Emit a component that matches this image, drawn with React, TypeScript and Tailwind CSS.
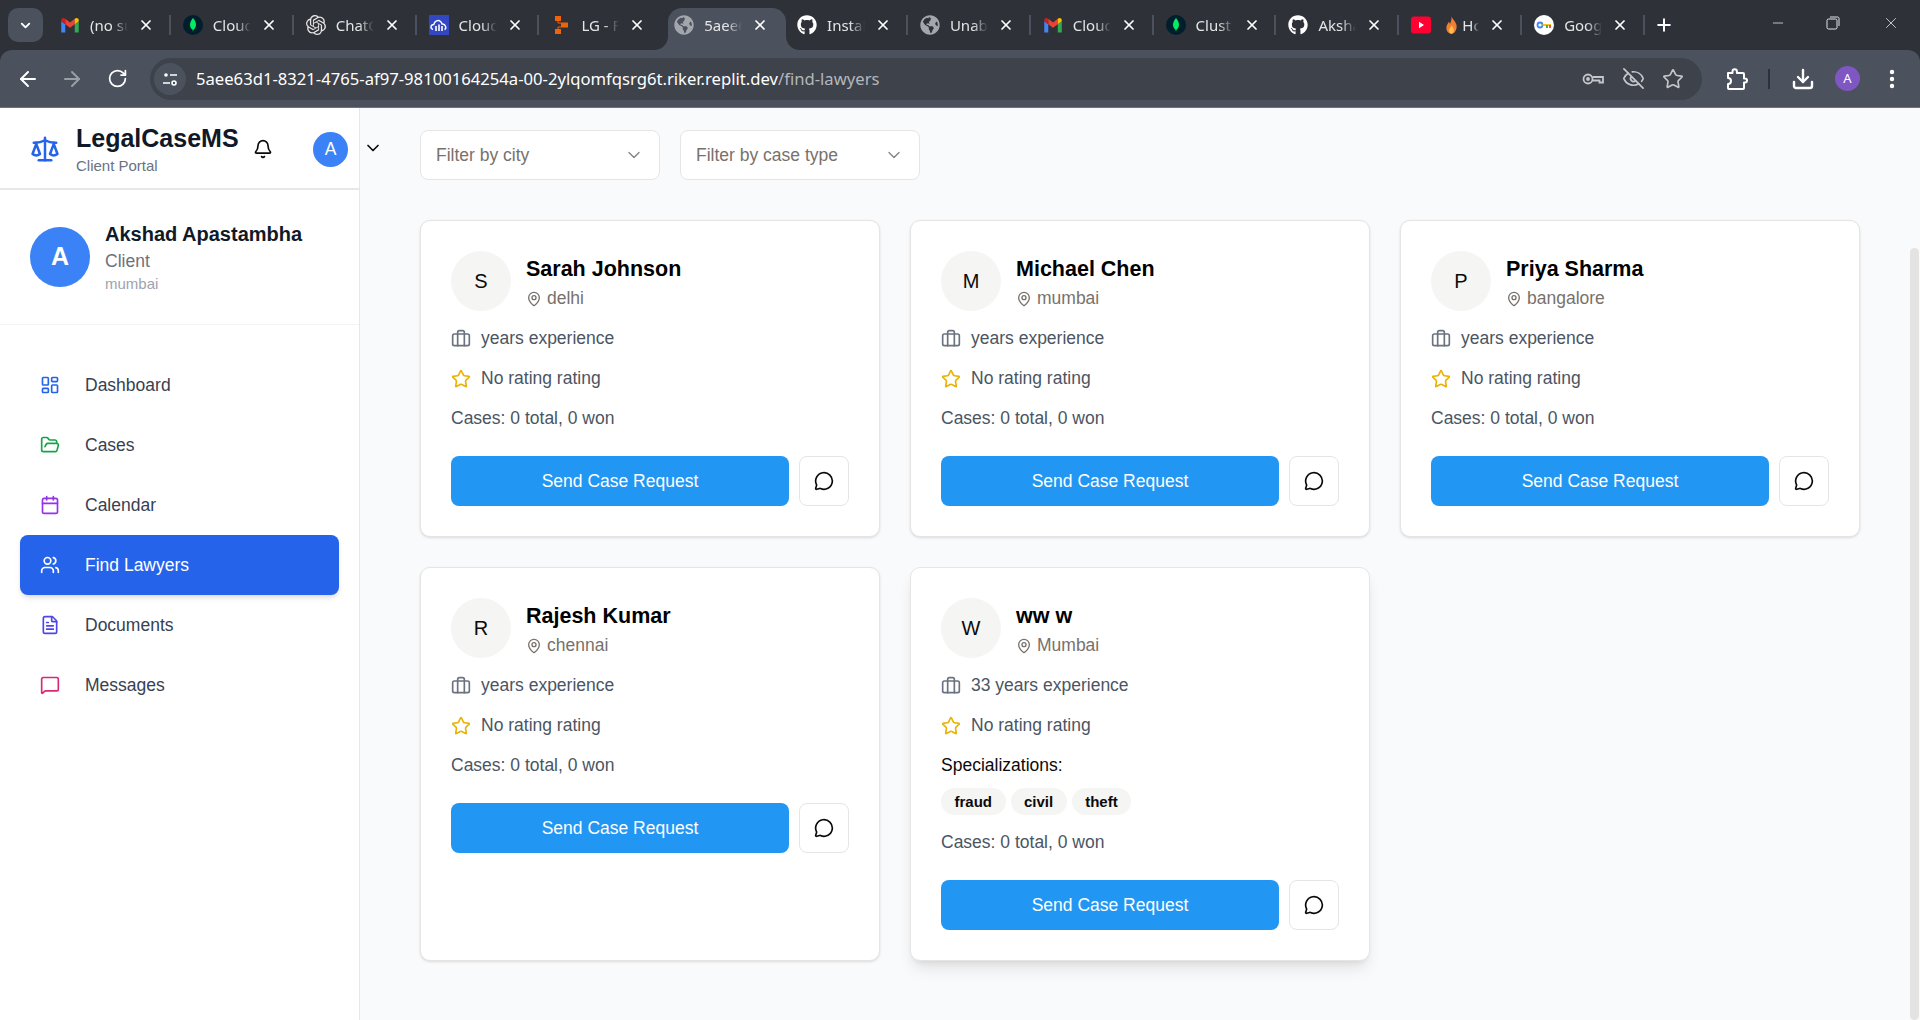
import type { ReactNode } from 'react';
import {
  ArrowLeft,
  ArrowRight,
  Bell,
  Briefcase,
  Calendar,
  ChevronDown,
  Download,
  EyeOff,
  FileText,
  FolderOpen,
  LayoutDashboard,
  MapPin,
  MessageCircle,
  MessageSquare,
  Minus,
  MoreVertical,
  Plus,
  RotateCw,
  Scale,
  Star,
  Users,
  X,
} from 'lucide-react';
import { FaGithub, FaGlobeAmericas } from 'react-icons/fa';
import { SiOpenai } from 'react-icons/si';

const GmailIcon = () => (
  <svg viewBox="0 0 24 24" className="w-5 h-5">
    <path fill="#4285f4" d="M1.5 21h4.8V11L1.5 7.5z" />
    <path fill="#34a853" d="M17.7 21h4.8V7.5L17.7 11z" />
    <path fill="#ea4335" d="M6.3 11V4.5L12 9l5.7-4.5V11L12 15.3z" />
    <path fill="#c5221f" d="M1.5 7.5V6c0-2.4 3-3.4 4.8-1.5V11z" />
    <path fill="#fbbc04" d="M17.7 11V4.5C19.5 2.6 22.5 3.6 22.5 6v1.5z" />
  </svg>
);

const MongoIcon = () => (
  <svg viewBox="0 0 24 24" className="w-5 h-5">
    <circle cx="12" cy="12" r="12" fill="#001e2b" />
    <path
      fill="#00ed64"
      d="M12 3.5c2.4 3 3.6 5.6 3.6 8.3 0 3-1.8 5-3.1 6l-.5 2.7-.5-2.7c-1.3-1-3.1-3-3.1-6 0-2.7 1.2-5.3 3.6-8.3z"
    />
  </svg>
);

const CloudIcon = () => (
  <svg viewBox="0 0 20 20" className="w-5 h-5">
    <rect width="20" height="20" fill="#3346c4" />
    <path
      fill="none"
      stroke="#fff"
      strokeWidth="1.4"
      d="M4 14.5c-3-.8-2.5-5 .8-5C5.5 6 9 4.500 11.500 6.500c1 .8 1.300 1.500 1.500 2.500 3.500-.5 5 4.500 2.500 5.500"
    />
    <path stroke="#fff" strokeWidth="1.6" d="M7 11v5M10 9.500V16M13 11v5" />
  </svg>
);

const LgIcon = () => (
  <svg viewBox="0 0 20 20" className="w-5 h-5">
    <rect x="4" y="1" width="6" height="5" fill="#f26207" />
    <rect x="10" y="7.500" width="7" height="5" fill="#f26207" />
    <rect x="4" y="14" width="6" height="5" fill="#f26207" />
    <path d="M7 6v2h3M7 14v-2h3" stroke="#f26207" fill="none" />
  </svg>
);

const YoutubeIcon = () => (
  <svg viewBox="0 0 20 20" className="w-5 h-5">
    <rect y="1.500" width="20" height="17" rx="3" fill="#ff0033" />
    <path d="M8 6.700v6.600l5-3.300z" fill="#fff" />
  </svg>
);

const FlameIcon = () => (
  <svg viewBox="0 0 12 20" className="w-[11px] h-[19px] shrink-0">
    <path
      fill="#f57c33"
      d="M6 0c.8 3 4 5 5.300 9 1.200 4.500-1.300 10-5.300 10S-.6 14.500.7 10.500C1.300 8.500 2.500 7.500 3 6c.8.6 1.200 1.400 1.300 2.300C5.600 6 6.300 3 6 0z"
    />
    <path fill="#fbc04a" d="M6 10c1.800 2 3 3.600 2.600 5.800C8.200 17.800 7 19 6 19s-2.400-1.200-2.700-3.200C3 13.800 5 12.200 6 10z" />
  </svg>
);

const GoogleKeyIcon = () => (
  <svg viewBox="0 0 20 20" className="w-5 h-5">
    <circle cx="10" cy="10" r="10" fill="#fff" />
    <circle cx="6" cy="10" r="2.500" fill="none" stroke="#4285f4" strokeWidth="1.800" />
    <path d="M8.500 10H17" stroke="#fbbc04" strokeWidth="1.800" />
    <path d="M13 10v3" stroke="#34a853" strokeWidth="1.800" />
    <path d="M16 10v3" stroke="#ea4335" strokeWidth="1.800" />
  </svg>
);

const KeyIcon = () => (
  <svg viewBox="0 0 24 24" className="w-6 h-6" fill="none" stroke="currentColor" strokeWidth="1.800">
    <circle cx="7" cy="12" r="4.500" />
    <circle cx="7" cy="12" r="1" />
    <path d="M11.500 10H22v5.500h-3.500v-2H11.500" />
  </svg>
);

const TuneIcon = () => (
  <svg viewBox="0 0 16 16" className="w-4 h-4" fill="none" stroke="currentColor" strokeWidth="1.600">
    <circle cx="4" cy="4" r="1.800" fill="currentColor" stroke="none" />
    <path d="M8 4h7M1 12h7" />
    <circle cx="12" cy="12" r="2" />
  </svg>
);

const PuzzleIcon = () => (
  <svg viewBox="0 0 24 24" className="w-6 h-6 ml-[22px] shrink-0" fill="none" stroke="currentColor" strokeWidth="2" strokeLinejoin="round">
    <path d="M4 6h4.500V4.500a2.200 2.200 0 0 1 4.400 0V6H19a1 1 0 0 1 1 1v4.500h1a2 2 0 0 1 0 4h-1V21a1 1 0 0 1-1 1H5a1 1 0 0 1-1-1v-4c2.500 0 3-1.500 3-3s-1-3-3-3z" />
  </svg>
);

const globe = <FaGlobeAmericas className="w-5 h-5 text-[#a3a7ad]" />;
const github = <FaGithub className="w-5 h-5 text-white" />;

interface Tab {
  title: string;
  icon: ReactNode;
  active?: boolean;
  flame?: boolean;
}

const tabs: Tab[] = [
  { title: '(no su', icon: <GmailIcon /> },
  { title: 'Cloud', icon: <MongoIcon /> },
  { title: 'ChatG', icon: <SiOpenai className="w-5 h-5 text-[#e5e5e5]" /> },
  { title: 'Cloud', icon: <CloudIcon /> },
  { title: 'LG - F', icon: <LgIcon /> },
  { title: '5aee6', icon: globe, active: true },
  { title: 'Instal', icon: github },
  { title: 'Unab', icon: globe },
  { title: 'Cloud', icon: <GmailIcon /> },
  { title: 'Clust', icon: <MongoIcon /> },
  { title: 'Aksha', icon: github },
  { title: 'Ho', icon: <YoutubeIcon />, flame: true },
  { title: 'Goog', icon: <GoogleKeyIcon /> },
];

const navItems = [
  { label: 'Dashboard', icon: LayoutDashboard, color: 'text-[#2563eb]' },
  { label: 'Cases', icon: FolderOpen, color: 'text-[#16a34a]' },
  { label: 'Calendar', icon: Calendar, color: 'text-[#9333ea]' },
  { label: 'Find Lawyers', icon: Users, color: 'text-white', active: true },
  { label: 'Documents', icon: FileText, color: 'text-[#4f46e5]' },
  { label: 'Messages', icon: MessageSquare, color: 'text-[#db2777]' },
];

const lawyers = [
  { name: 'Sarah Johnson', city: 'delhi', years: '' },
  { name: 'Michael Chen', city: 'mumbai', years: '' },
  { name: 'Priya Sharma', city: 'bangalore', years: '' },
  { name: 'Rajesh Kumar', city: 'chennai', years: '' },
  { name: 'ww w', city: 'Mumbai', years: '33 ', tags: ['fraud', 'civil', 'theft'], hovered: true },
];

function BrowserTab({ tab, hideDivider }: { tab: Tab; hideDivider: boolean }) {
  return (
    <div className="relative w-[122.850px] h-[34px] flex items-center pl-3 shrink-0">
      {tab.active && (
        <>
          <div className="absolute left-[6px] right-[-1px] top-0 bottom-[-8px] bg-[#4b525d] rounded-t-[14px]" />
          <svg viewBox="0 0 14 14" className="absolute left-[-8px] bottom-[-8px] w-[14px] h-[14px]">
            <path d="M14 0v14H0c8 0 14-6 14-14z" fill="#4b525d" />
          </svg>
          <svg viewBox="0 0 14 14" className="absolute right-[-15px] bottom-[-8px] w-[14px] h-[14px]">
            <path d="M0 0v14h14C6 14 0 8 0 0z" fill="#4b525d" />
          </svg>
        </>
      )}
      <div className="relative w-5 h-5 flex items-center justify-center shrink-0">{tab.icon}</div>
      <div className="relative w-[38px] ml-[10px] flex items-center shrink-0">
        {tab.flame && (
          <div className="ml-[5px] mr-[5px] shrink-0">
            <FlameIcon />
          </div>
        )}
        <span className="flex-1 min-w-0 font-['Noto_Sans',sans-serif] text-[15px] text-[#e4e5e7] whitespace-nowrap [mask-image:linear-gradient(to_right,black_60%,transparent_100%)]">
          {tab.title}
        </span>
      </div>
      <X className="relative w-4 h-4 ml-[10px] text-white shrink-0" strokeWidth={2.6} />
      {!tab.active && !hideDivider && (
        <div className="absolute right-0 top-[7px] h-5 w-[2px] bg-[#4b525d]" />
      )}
    </div>
  );
}

function BrowserChrome() {
  return (
    <div className="bg-[#2e3138] shrink-0">
      <div className="h-[50px] flex items-start pt-2 pl-2 relative">
        <div className="w-[35px] h-[34px] rounded-[10px] bg-[#4b525d] flex items-center justify-center shrink-0">
          <ChevronDown className="w-[15px] h-[15px] text-white" strokeWidth={3} />
        </div>
        <div className="flex ml-[5px]">
          {tabs.map((tab, i) => (
            <BrowserTab key={i} tab={tab} hideDivider={tabs[i + 1]?.active === true} />
          ))}
        </div>
        <Plus className="w-5 h-5 text-white ml-[9px] mt-[7px] shrink-0" strokeWidth={2.4} />
        <div className="ml-auto flex items-center h-[30px] text-[#e4e5e7]">
          <Minus className="w-4 h-4 mr-10" strokeWidth={1.2} />
          <svg viewBox="0 0 14 14" className="w-[14px] h-[14px] mr-[42px]" fill="none" stroke="currentColor" strokeWidth="1">
            <rect x="1" y="3" width="10" height="10" rx="1.500" />
            <path d="M4 1h7.500A1.500 1.500 0 0 1 13 2.500V10" />
          </svg>
          <X className="w-[18px] h-[18px] mr-5" strokeWidth={1.1} />
        </div>
      </div>
      <div className="h-[57px] bg-[#4b525d] rounded-t-[12px] flex items-center pl-4 text-white">
        <ArrowLeft className="w-6 h-6 shrink-0" strokeWidth={2} />
        <ArrowRight className="w-6 h-6 ml-5 text-[#9a9ea5] shrink-0" strokeWidth={2} />
        <RotateCw className="w-[21px] h-[21px] ml-[23px] shrink-0" strokeWidth={2} />
        <div className="ml-[22px] w-[1552px] h-[42px] rounded-full bg-[#3d424b] flex items-center pl-1 pr-[18px] shrink-0">
          <div className="w-8 h-8 rounded-full bg-[#4b525d] flex items-center justify-center">
            <TuneIcon />
          </div>
          <span className="ml-[10px] pt-[2px] font-['Noto_Sans',sans-serif] text-[16.650px] text-white whitespace-nowrap">
            5aee63d1-8321-4765-af97-98100164254a-00-2ylqomfqsrg6t.riker.replit.dev
            <span className="text-[#b4b7bc]">/find-lawyers</span>
          </span>
          <div className="ml-auto flex items-center gap-[17px] text-[#c4c6ca]">
            <KeyIcon />
            <EyeOff className="w-[23px] h-[23px]" strokeWidth={1.8} />
            <Star className="w-[22px] h-[22px]" strokeWidth={1.8} />
          </div>
        </div>
        <PuzzleIcon />
        <div className="w-[2px] h-5 ml-5 bg-[#2e3138] shrink-0" />
        <Download className="w-6 h-6 ml-[21px] shrink-0" strokeWidth={2.4} />
        <div className="w-[25px] h-[25px] ml-5 rounded-full bg-[#7e57c2] flex items-center justify-center text-[13px] font-['Noto_Sans',sans-serif] shrink-0">
          A
        </div>
        <MoreVertical className="w-6 h-6 ml-5 shrink-0" strokeWidth={2.4} />
      </div>
      <div className="h-px bg-[#6b7280]" />
    </div>
  );
}

function Sidebar() {
  return (
    <aside className="w-[360px] shrink-0 bg-white border-r border-[#e5e7eb] flex flex-col">
      <div className="h-[82px] border-b-2 border-[#e5e7eb] flex items-center pl-[30px] pt-[2px] shrink-0 relative">
        <Scale className="w-[30px] h-[30px] text-[#2563eb] shrink-0" strokeWidth={2} />
        <div className="ml-4 w-[155px] shrink-0">
          <div className="text-[25px] leading-[30px] font-bold text-[#111827] whitespace-nowrap">LegalCaseMS</div>
          <div className="text-[15px] leading-[20px] text-[#6b7280] mt-[3px]">Client Portal</div>
        </div>
        <Bell className="w-5 h-5 text-[#0c0a09] ml-[22px] shrink-0" />
        <div className="w-[35px] h-[35px] rounded-full bg-[#3b82f6] text-white flex items-center justify-center text-[17.500px] font-medium ml-10 shrink-0">
          A
        </div>
        <ChevronDown className="absolute left-[363px] top-[30px] w-5 h-5 text-[#0c0a09]" />
      </div>
      <div className="h-[135px] border-b border-[#f3f4f6] flex items-center pl-[30px] shrink-0">
        <div className="w-[60px] h-[60px] rounded-full bg-[#3b82f6] text-white flex items-center justify-center text-[25px] font-bold">
          A
        </div>
        <div className="ml-[15px]">
          <div className="text-[20px] leading-[26px] font-semibold text-[#111827] whitespace-nowrap">Akshad Apastambha</div>
          <div className="text-[17.500px] leading-[25px] text-[#6b7280] mt-[2px]">Client</div>
          <div className="text-[15px] leading-[20px] text-[#9ca3af]">mumbai</div>
        </div>
      </div>
      <nav className="px-5 pt-[30px] flex flex-col">
        {navItems.map((item) => (
          <div
            key={item.label}
            className={`h-[60px] rounded-[8px] flex items-center pl-5 text-[17.500px] font-medium ${
              item.active ? 'bg-[#2563eb] text-white shadow-md' : 'text-[#374151]'
            }`}
          >
            <item.icon className={`w-5 h-5 shrink-0 ${item.color}`} />
            <span className="ml-[25px]">{item.label}</span>
          </div>
        ))}
      </nav>
    </aside>
  );
}

function FilterSelect({ label }: { label: string }) {
  return (
    <div className="w-[240px] h-[50px] bg-white border border-[#e7e5e4] rounded-[8px] flex items-center justify-between px-[15px]">
      <span className="text-[17.500px] text-[#78716c]">{label}</span>
      <ChevronDown className="w-5 h-5 text-[#0c0a09] opacity-50" strokeWidth={1.6} />
    </div>
  );
}

function LawyerCard({ lawyer }: { lawyer: (typeof lawyers)[number] }) {
  return (
    <div
      className={`bg-white border border-[#e7e5e4] rounded-[10px] p-[30px] ${
        lawyer.hovered ? 'shadow-lg' : 'shadow-sm'
      }`}
    >
      <div className="flex gap-[15px] mb-[15px]">
        <div className="w-[60px] h-[60px] rounded-full bg-[#f5f5f4] flex items-center justify-center text-[20px] text-[#0c0a09] shrink-0">
          {lawyer.name[0].toUpperCase()}
        </div>
        <div>
          <div className="text-[21.500px] leading-[30px] font-semibold text-black mt-[3px]">{lawyer.name}</div>
          <div className="flex items-center gap-[5px] text-[17.500px] leading-[25px] text-[#78716c] mt-[2px]">
            <MapPin className="w-4 h-4" />
            {lawyer.city}
          </div>
        </div>
      </div>
      <div className="flex flex-col gap-[15px] text-[17.500px] leading-[25px] text-[#4b5563]">
        <div className="flex items-center gap-[10px]">
          <Briefcase className="w-5 h-5 text-[#6b7280]" />
          {lawyer.years}years experience
        </div>
        <div className="flex items-center gap-[10px]">
          <Star className="w-5 h-5 text-[#eab308]" />
          No rating rating
        </div>
        {lawyer.tags && (
          <div>
            <div className="text-[#0c0a09]">Specializations:</div>
            <div className="flex gap-[5px] mt-[10px]">
              {lawyer.tags.map((tag) => (
                <span
                  key={tag}
                  className="h-[27px] px-[13.500px] rounded-full bg-[#f5f5f4] flex items-center text-[15px] font-semibold text-[#0c0a09]"
                >
                  {tag}
                </span>
              ))}
            </div>
          </div>
        )}
        <div>Cases: 0 total, 0 won</div>
      </div>
      <div className="flex gap-[10px] mt-[25px]">
        <button className="flex-1 h-[50px] rounded-[8px] bg-[#2196f3] text-white text-[17.500px] font-medium">
          Send Case Request
        </button>
        <button className="w-[50px] h-[50px] rounded-[8px] border border-[#e7e5e4] bg-white flex items-center justify-center text-[#0c0a09]">
          <MessageCircle className="w-5 h-5" />
        </button>
      </div>
    </div>
  );
}

export default function App() {
  return (
    <div className="h-screen flex flex-col overflow-hidden font-['Liberation_Sans',Arial,sans-serif]">
      <BrowserChrome />
      <div className="flex-1 flex min-h-0 relative">
        <Sidebar />
        <main className="flex-1 bg-[#f9fafb] px-[60px] pt-[22px]">
          <div className="flex gap-5 mb-10">
            <FilterSelect label="Filter by city" />
            <FilterSelect label="Filter by case type" />
          </div>
          <div className="grid grid-cols-3 gap-[30px]">
            {lawyers.map((lawyer) => (
              <LawyerCard key={lawyer.name} lawyer={lawyer} />
            ))}
          </div>
        </main>
        <div className="absolute right-px top-[140px] bottom-0 w-[9px] rounded-full bg-[#e5e3e1]" />
      </div>
    </div>
  );
}
